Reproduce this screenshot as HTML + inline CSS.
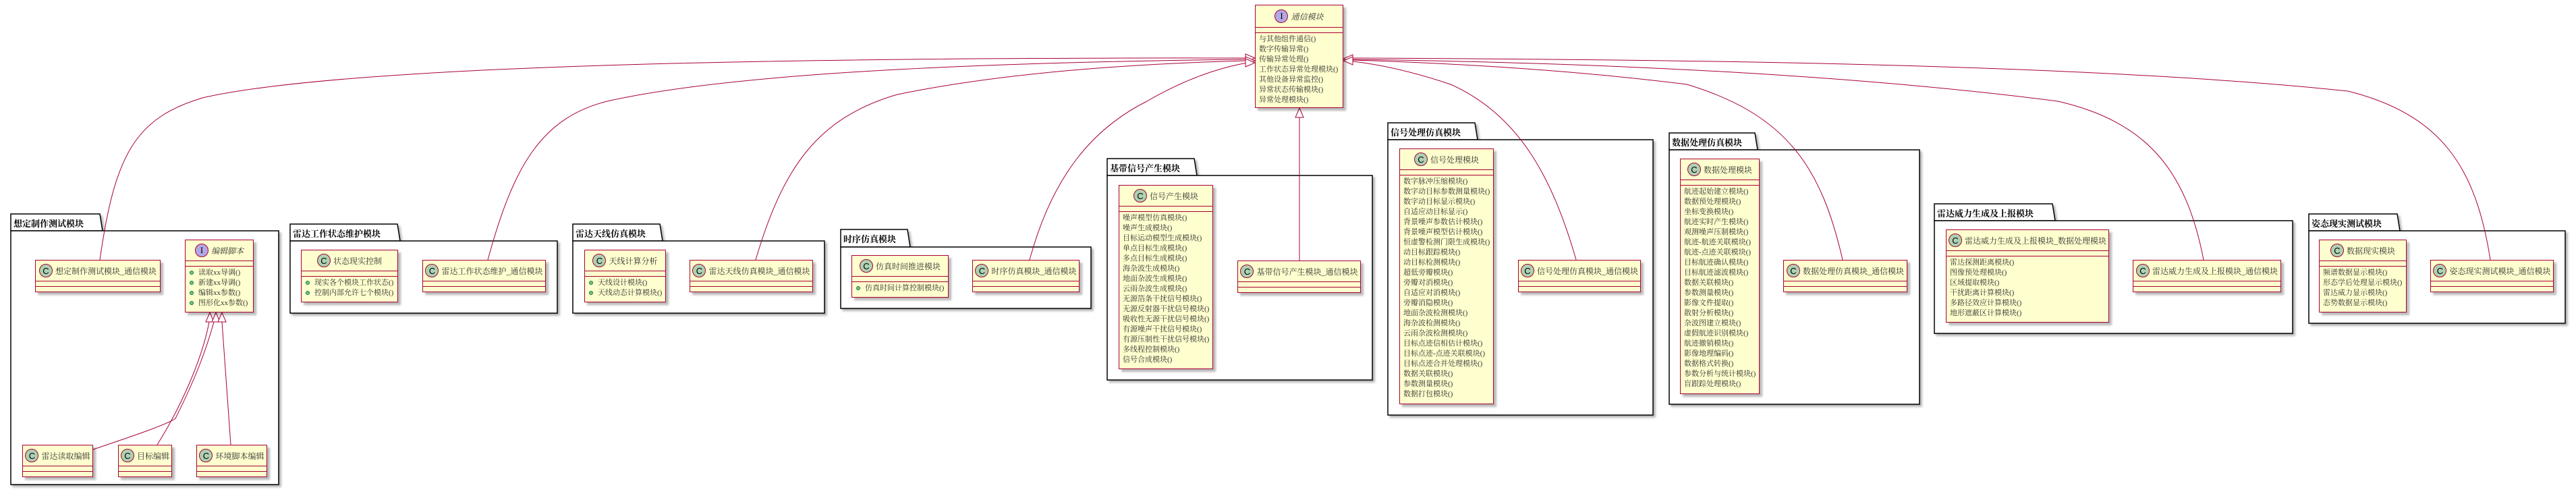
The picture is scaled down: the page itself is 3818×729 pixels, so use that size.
<!DOCTYPE html>
<html><head><meta charset="utf-8">
<style>
html,body{margin:0;padding:0;background:#fff;}
body{width:3818px;height:729px;position:relative;overflow:hidden;font-family:"Liberation Serif","Noto Serif CJK SC",serif;}
svg.bg{position:absolute;left:0;top:0;}
.c{position:absolute;background:#FEFECE;border:1.5px solid #A80036;box-sizing:border-box;box-shadow:4px 4px 3px rgba(0,0,0,0.28);color:#333;}
.h{height:31px;border-bottom:1.5px solid #A80036;display:flex;align-items:center;justify-content:center;font-size:12px;white-space:nowrap;box-sizing:border-box;}
.e{height:8px;border-bottom:1.5px solid #A80036;box-sizing:border-box;}
.e2{height:8px;}
.i{width:20px;height:20px;border-radius:50%;border:1px solid #A80036;box-sizing:border-box;display:inline-flex;align-items:center;justify-content:center;font-family:"Liberation Sans",sans-serif;font-size:13px;color:#000;margin-right:4px;flex:none;}
.cc{background:#ADD1B2;}
.ii{background:#B4A7E5;font-family:"Liberation Serif",serif;}
.m{font-size:11px;line-height:15px;padding:2px 0 0 5px;white-space:nowrap;}
.m div{height:15px;}
.d div{position:relative;padding-left:14px;}
.d div:before{content:"";position:absolute;left:1px;top:4px;width:6px;height:6px;border-radius:50%;background:#84BE84;border:1px solid #038048;box-sizing:border-box;}
.it{font-style:italic;}
.pt{position:absolute;font-size:13px;font-weight:bold;color:#000;white-space:nowrap;}
</style></head><body>
<svg class="bg" width="3818" height="729" xmlns="http://www.w3.org/2000/svg">
<defs><filter id="sh" x="-5%" y="-5%" width="110%" height="110%"><feDropShadow dx="3" dy="3" stdDeviation="1.5" flood-color="#000" flood-opacity="0.3"/></filter></defs>
<g fill="#fff" stroke="#000" stroke-width="1.5" filter="url(#sh)">
<path d="M16,342 L16,317 L148,317 L152,342 Z"/><rect x="16" y="342" width="397" height="376"/>
<path d="M430,357 L430,332 L589,332 L593,357 Z"/><rect x="430" y="357" width="396" height="107"/>
<path d="M849,357 L849,332 L978,332 L982,357 Z"/><rect x="849" y="357" width="373" height="107"/>
<path d="M1246,366 L1246,340 L1345,340 L1349,366 Z"/><rect x="1246" y="366" width="371" height="91"/>
<path d="M1641,260 L1641,235 L1770,235 L1774,260 Z"/><rect x="1641" y="260" width="393" height="303"/>
<path d="M2057,207 L2057,182 L2186,182 L2190,207 Z"/><rect x="2057" y="207" width="393" height="408"/>
<path d="M2474,222 L2474,197 L2601,197 L2605,222 Z"/><rect x="2474" y="222" width="371" height="377"/>
<path d="M2867,327 L2867,302 L3042,302 L3046,327 Z"/><rect x="2867" y="327" width="531" height="167"/>
<path d="M3422,342 L3422,317 L3553,317 L3557,342 Z"/><rect x="3422" y="342" width="380" height="137"/>
</g>
<g fill="none" stroke="#A80036" stroke-width="1">
<path d="M148,385 C170,230 200,175 300,145 C520,95 1200,85 1846,86"/>
<path d="M723,385 C760,250 800,175 900,150 C1100,105 1500,92 1846,88"/>
<path d="M1120,385 C1160,250 1210,175 1330,140 C1500,105 1700,94 1846,90"/>
<path d="M1526,385 C1560,260 1620,190 1700,150 C1760,115 1810,100 1848,93"/>
<path d="M1926,386 L1926,174"/>
<path d="M2336,385 C2300,260 2250,170 2150,125 C2090,105 2040,95 2005,91"/>
<path d="M2731,385 C2700,250 2650,170 2500,125 C2300,100 2100,92 2005,89"/>
<path d="M3266,385 C3240,250 3180,180 3050,150 C2700,105 2300,92 2005,88"/>
<path d="M3691,385 C3670,250 3620,170 3480,135 C3100,95 2500,88 2005,86"/>
<path d="M138,666 C200,645 250,628 260,620 C290,560 305,520 317,477"/>
<path d="M233,659 C270,600 300,530 310,477"/>
<path d="M342,659 L329,477"/>
</g>
<g fill="#fff" stroke="#A80036" stroke-width="1">
<polygon points="1860,86 1846,80 1846,92"/>
<polygon points="1860,90 1846,84 1846,96"/>
<polygon points="1860,93 1846,87 1846,99"/>
<polygon points="1991,87 2005,81 2005,93"/>
<polygon points="1991,90 2005,84 2005,96"/>
<polygon points="1926,160 1920,174 1932,174"/>
<polygon points="311,463 305,477 317,477"/>
<polygon points="320,463 314,477 326,477"/>
<polygon points="329,463 323,477 335,477"/>
</g>
</svg>

<div class="pt" style="left:20px;top:321px">想定制作测试模块</div>
<div class="pt" style="left:434px;top:336px">雷达工作状态维护模块</div>
<div class="pt" style="left:853px;top:336px">雷达天线仿真模块</div>
<div class="pt" style="left:1250px;top:344px">时序仿真模块</div>
<div class="pt" style="left:1645px;top:239px">基带信号产生模块</div>
<div class="pt" style="left:2061px;top:186px">信号处理仿真模块</div>
<div class="pt" style="left:2478px;top:201px">数据处理仿真模块</div>
<div class="pt" style="left:2871px;top:306px">雷达威力生成及上报模块</div>
<div class="pt" style="left:3426px;top:321px">姿态现实测试模块</div>

<!-- 想定 -->
<div class="c" style="left:52px;top:385px;width:186px;height:48px"><div class="h"><span class="i cc">C</span>想定制作测试模块_通信模块</div><div class="e"></div></div>
<div class="c" style="left:274px;top:355px;width:102px;height:108px"><div class="h"><span class="i ii">I</span><span class="it">编辑脚本</span></div><div class="e"></div><div class="m d"><div>读取xx导调()</div><div>新建xx导调()</div><div>编辑xx参数()</div><div>图形化xx参数()</div></div></div>
<div class="c" style="left:33px;top:659px;width:105px;height:48px"><div class="h"><span class="i cc">C</span>雷达读取编辑</div><div class="e"></div></div>
<div class="c" style="left:175px;top:659px;width:80px;height:48px"><div class="h"><span class="i cc">C</span>目标编辑</div><div class="e"></div></div>
<div class="c" style="left:291px;top:659px;width:105px;height:48px"><div class="h"><span class="i cc">C</span>环境脚本编辑</div><div class="e"></div></div>

<!-- 雷达工作 -->
<div class="c" style="left:446px;top:370px;width:144px;height:78px"><div class="h"><span class="i cc">C</span>状态现实控制</div><div class="e"></div><div class="m d"><div>现实各个模块工作状态()</div><div>控制内部允许七个模块()</div></div></div>
<div class="c" style="left:626px;top:385px;width:183px;height:48px"><div class="h"><span class="i cc">C</span>雷达工作状态维护_通信模块</div><div class="e"></div></div>

<!-- 天线 -->
<div class="c" style="left:866px;top:370px;width:121px;height:78px"><div class="h"><span class="i cc">C</span>天线计算分析</div><div class="e"></div><div class="m d"><div>天线设计模块()</div><div>天线动态计算模块()</div></div></div>
<div class="c" style="left:1022px;top:385px;width:183px;height:48px"><div class="h"><span class="i cc">C</span>雷达天线仿真模块_通信模块</div><div class="e"></div></div>

<!-- 时序 -->
<div class="c" style="left:1262px;top:378px;width:144px;height:63px"><div class="h"><span class="i cc">C</span>仿真时间推进模块</div><div class="e"></div><div class="m d"><div>仿真时间计算控制模块()</div></div></div>
<div class="c" style="left:1441px;top:385px;width:159px;height:48px"><div class="h"><span class="i cc">C</span>时序仿真模块_通信模块</div><div class="e"></div></div>

<!-- 通信模块 -->
<div class="c" style="left:1860px;top:7px;width:131px;height:153px"><div class="h" style="height:33px"><span class="i ii">I</span><span class="it">通信模块</span></div><div class="e"></div><div class="m"><div>与其他组件通信()</div><div>数字传输异常()</div><div>传输异常处理()</div><div>工作状态异常处理模块()</div><div>其他设备异常监控()</div><div>异常状态传输模块()</div><div>异常处理模块()</div></div></div>

<!-- 基带 -->
<div class="c" style="left:1658px;top:274px;width:140px;height:273px"><div class="h"><span class="i cc">C</span>信号产生模块</div><div class="e"></div><div class="m"><div>噪声模型仿真模块()</div><div>噪声生成模块()</div><div>目标运动模型生成模块()</div><div>单点目标生成模块()</div><div>多点目标生成模块()</div><div>海杂波生成模块()</div><div>地面杂波生成模块()</div><div>云雨杂波生成模块()</div><div>无源箔条干扰信号模块()</div><div>无源反射器干扰信号模块()</div><div>吸收性无源干扰信号模块()</div><div>有源噪声干扰信号模块()</div><div>有源压制性干扰信号模块()</div><div>多线程控制模块()</div><div>信号合成模块()</div></div></div>
<div class="c" style="left:1834px;top:386px;width:183px;height:48px"><div class="h"><span class="i cc">C</span>基带信号产生模块_通信模块</div><div class="e"></div></div>

<!-- 信号处理 -->
<div class="c" style="left:2074px;top:220px;width:140px;height:379px"><div class="h"><span class="i cc">C</span>信号处理模块</div><div class="e"></div><div class="m"><div>数字脉冲压缩模块()</div><div>数字动目标参数测量模块()</div><div>数字动目标显示模块()</div><div>自适应动目标显示()</div><div>背景噪声参数估计模块()</div><div>背景噪声模型估计模块()</div><div>恒虚警检测门限生成模块()</div><div>动目标跟踪模块()</div><div>动目标检测模块()</div><div>超低旁瓣模块()</div><div>旁瓣对消模块()</div><div>自适应对消模块()</div><div>旁瓣消隐模块()</div><div>地面杂波检测模块()</div><div>海杂波检测模块()</div><div>云雨杂波检测模块()</div><div>目标点迹信相估计模块()</div><div>目标点迹-点迹关联模块()</div><div>目标点迹合并处理模块()</div><div>数据关联模块()</div><div>参数测量模块()</div><div>数据打包模块()</div></div></div>
<div class="c" style="left:2250px;top:385px;width:182px;height:48px"><div class="h"><span class="i cc">C</span>信号处理仿真模块_通信模块</div><div class="e"></div></div>

<!-- 数据处理 -->
<div class="c" style="left:2490px;top:235px;width:118px;height:349px"><div class="h"><span class="i cc">C</span>数据处理模块</div><div class="e"></div><div class="m"><div>航迹起始建立模块()</div><div>数据预处理模块()</div><div>坐标变换模块()</div><div>航迹实时产生模块()</div><div>观测噪声压制模块()</div><div>航迹-航迹关联模块()</div><div>航迹-点迹关联模块()</div><div>目标航迹确认模块()</div><div>目标航迹滤波模块()</div><div>数据关联模块()</div><div>参数测量模块()</div><div>影像文件提取()</div><div>散射分析模块()</div><div>杂波图建立模块()</div><div>虚假航迹识别模块()</div><div>航迹撤销模块()</div><div>影像地理编码()</div><div>数据格式转换()</div><div>参数分析与统计模块()</div><div>盲跟踪处理模块()</div></div></div>
<div class="c" style="left:2643px;top:385px;width:184px;height:48px"><div class="h"><span class="i cc">C</span>数据处理仿真模块_通信模块</div><div class="e"></div></div>

<!-- 雷达威力 -->
<div class="c" style="left:2884px;top:340px;width:242px;height:138px"><div class="h"><span class="i cc">C</span>雷达威力生成及上报模块_数据处理模块</div><div class="e"></div><div class="m"><div>雷达探测距离模块()</div><div>图像预处理模块()</div><div>区域提取模块()</div><div>干扰距离计算模块()</div><div>多路径效应计算模块()</div><div>地形遮蔽区计算模块()</div></div></div>
<div class="c" style="left:3161px;top:385px;width:220px;height:48px"><div class="h"><span class="i cc">C</span>雷达威力生成及上报模块_通信模块</div><div class="e"></div></div>

<!-- 姿态 -->
<div class="c" style="left:3437px;top:355px;width:130px;height:108px"><div class="h"><span class="i cc">C</span>数据现实模块</div><div class="e"></div><div class="m"><div>频谱数据显示模块()</div><div>形态学后处理显示模块()</div><div>雷达威力显示模块()</div><div>态势数据显示模块()</div></div></div>
<div class="c" style="left:3602px;top:385px;width:183px;height:48px"><div class="h"><span class="i cc">C</span>姿态现实测试模块_通信模块</div><div class="e"></div></div>
</body></html>
